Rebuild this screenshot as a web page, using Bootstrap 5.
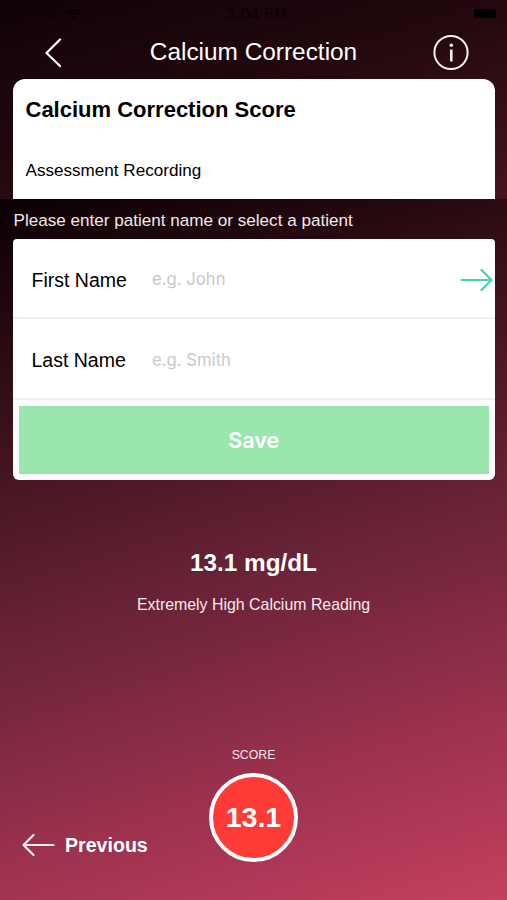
<!DOCTYPE html>
<html lang="en">
<head>
<meta charset="utf-8">
<meta name="viewport" content="width=device-width, initial-scale=1">
<title>Calcium Correction</title>
<link href="https://cdn.jsdelivr.net/npm/bootstrap@5.3.0/dist/css/bootstrap.min.css" rel="stylesheet">
<style>
  body { font-family: "Liberation Sans", Arial, sans-serif; background: #14040a; }
  .screen { height: 900px; overflow: hidden; }
  .upper { height: 199px; background: linear-gradient(162deg, #100206 0%, #24090f 48%, #4f1727 115%); }
  .status { height: 27px; color: #090103; font-size: 14.5px; line-height: 27px; padding: 0 11px 0 18px; font-family: Inter, sans-serif; }
  .status .side { width: 120px; }
  .carrier { font-size: 12px; opacity: .45; }
  .clock { letter-spacing: .4px; }
  .battery { width: 22px; height: 9px; border-radius: 2px; background: #000; }
  .titlebar { height: 52px; padding: 0 37px 2px 44px; }
  .titlebar h1 { font-size: 24.4px; line-height: 30px; }
  .titlebar svg { display: block; }
  .summary { height: 120px; margin: 0 12.5px 0 13px; padding: 16px 12.5px; border-radius: 12px 12px 0 0; }
  .summary h2 { font-size: 22px; line-height: 30px; }
  .summary p { font-size: 17.1px; line-height: 24px; margin-top: 34px; }
  .sheet { background: linear-gradient(163deg, #0a0003 0%, #280a11 17%, #481623 34%, #6c2438 54%, #9a314d 77%, #c3405f 100%); }
  .prompt { height: 40px; font-size: 17.1px; line-height: 43px; padding-left: 13.5px; color: #f3e9ec; }
  .panel { height: 241px; margin: 0 12.5px 0 13px; border-radius: 4px 4px 6px 6px; }
  .field { height: 80px; border-bottom: 2px solid #f0f0f0; padding: 4px 0 0 18.5px; }
  .field + .field { height: 81px; }
  .field label { width: 120.5px; font-size: 19.5px; padding-top: 1px; }
  .field input { font-family: Inter, sans-serif; font-size: 16.7px; color: #333; }
  .field input::placeholder { color: #c9c9cb; opacity: 1; }
  .save { height: 68px; margin: 6px 6px 0; background: #9ae6ae; color: #fff; font: 600 21.5px/68px Inter, sans-serif; }
  .reading { margin-top: 68px; }
  .reading h3 { font-size: 24.3px; line-height: 30px; }
  .reading p { font-size: 15.9px; line-height: 20px; margin-top: 17px; color: #f8e9ed; }
  .footer-row { padding: 0 22px 38px; }
  .footer-row > * { flex: 1 1 0; }
  .previous { font-size: 19.6px; line-height: 24px; padding-bottom: 5px; }
  .previous svg { margin-right: 10px; }
  .score-label { font-size: 12.3px; line-height: 16px; margin-bottom: 10px; color: #f6e3e8; }
  .score-disc { width: 89px; height: 89px; border: 4px solid #fff; background: #ff3b37; font-size: 28.5px; }
</style>
</head>
<body>
<main class="screen d-flex flex-column text-white">
  <section class="upper flex-shrink-0">
    <div class="status d-flex justify-content-between align-items-center">
      <div class="side d-flex align-items-center gap-2">
        <span class="carrier">Carrier</span>
        <svg width="16" height="12" viewBox="0 0 16 12" fill="none" stroke="#060002" stroke-width="2"><path d="M1 4.5a10 10 0 0 1 14 0M3.6 7.2a6.2 6.2 0 0 1 8.8 0"/><path d="M8 11.5 6 9.3a3 3 0 0 1 4 0z" fill="#060002" stroke="none"/></svg>
      </div>
      <span class="clock">3:04 PM</span>
      <div class="side d-flex justify-content-end"><span class="battery"></span></div>
    </div>
    <header class="titlebar d-flex justify-content-between align-items-center">
      <svg width="31" height="30" viewBox="0 0 31 30" fill="none" stroke="#fff" stroke-width="2.2" stroke-linecap="round" stroke-linejoin="round"><path d="M16 2.500 2.500 16 16 29"/></svg>
      <h1 class="mb-0 fw-normal">Calcium Correction</h1>
      <svg width="38" height="38" viewBox="0 0 38 38" fill="none" stroke="#f7eef0" stroke-width="2"><circle cx="19" cy="19.500" r="16.600"/><path d="M19.300 16.500V28.500" stroke-width="2.600"/><circle cx="19.300" cy="12.300" r="1.800" fill="#f7eef0" stroke="none"/></svg>
    </header>
    <div class="summary bg-white text-black">
      <h2 class="mb-0 fw-bold">Calcium Correction Score</h2>
      <p class="mb-0">Assessment Recording</p>
    </div>
  </section>

  <section class="sheet flex-grow-1 d-flex flex-column">
    <div class="prompt">Please enter patient name or select a patient</div>
    <form class="panel bg-white text-black">
      <div class="field d-flex align-items-center">
        <label for="first">First Name</label>
        <input id="first" class="form-control border-0 p-0 flex-grow-1 w-auto" placeholder="e.g. John">
        <svg class="flex-shrink-0" width="35" height="24" viewBox="0 0 35 24" fill="none" stroke="#45d2b0" stroke-width="2.200" stroke-linecap="round" stroke-linejoin="round"><path d="M1.500 12H31M21.500 2 31.500 12 21.500 22"/></svg>
      </div>
      <div class="field d-flex align-items-center">
        <label for="last">Last Name</label>
        <input id="last" class="form-control border-0 p-0 flex-grow-1 w-auto" placeholder="e.g. Smith">
      </div>
      <div class="d-grid"><button type="button" class="save border-0 p-0">Save</button></div>
    </form>
    <div class="reading text-center">
      <h3 class="mb-0 fw-bold">13.1 mg/dL</h3>
      <p class="mb-0">Extremely High Calcium Reading</p>
    </div>
    <div class="footer-row d-flex align-items-end mt-auto">
      <div class="previous d-flex align-items-center fw-bold">
        <svg width="33" height="24" viewBox="0 0 33 24" fill="none" stroke="#f8e9ed" stroke-width="2.200" stroke-linecap="round" stroke-linejoin="round"><path d="M31.500 12H2M11.500 2 1.500 12 11.500 22"/></svg>
        <span>Previous</span>
      </div>
      <div class="d-flex flex-column align-items-center">
        <span class="score-label">SCORE</span>
        <div class="score-disc rounded-circle d-flex align-items-center justify-content-center fw-bold">13.1</div>
      </div>
      <div></div>
    </div>
  </section>
</main>
<script src="https://cdn.jsdelivr.net/npm/bootstrap@5.3.0/dist/js/bootstrap.bundle.min.js"></script>
</body>
</html>
